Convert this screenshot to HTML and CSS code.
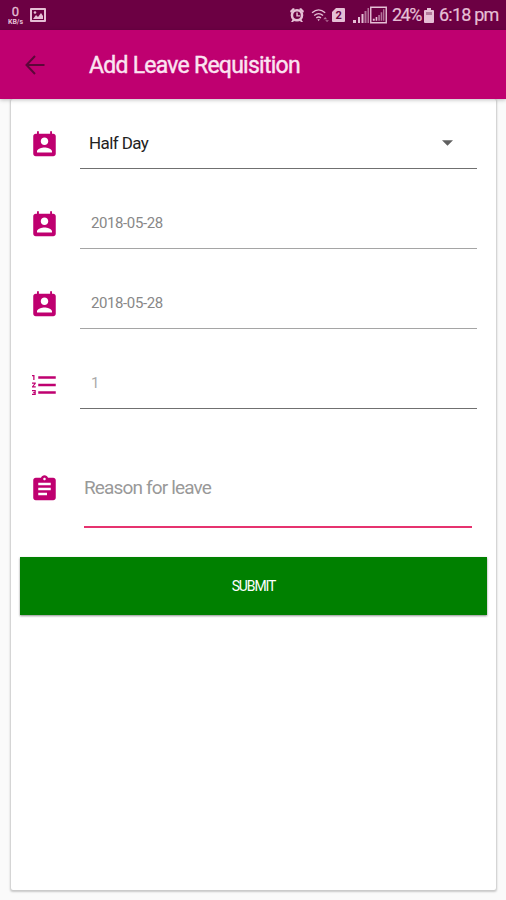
FILE: index.html
```html
<!DOCTYPE html>
<html lang="en">
<head>
<meta charset="utf-8">
<title>Add Leave Requisition</title>
<link rel="stylesheet" href="styles.css">
</head>
<body>
<svg class="defs" width="0" height="0">
  <symbol id="contact" viewBox="0 0 24 24"><path fill-rule="evenodd" d="M19 3h-1V1h-1.500v2H7.500V1H6v2H5c-1.100 0-2 .9-2 2v14c0 1.100.9 2 2 2h14c1.100 0 2-.9 2-2V5c0-1.100-.9-2-2-2zm-7 3c1.700 0 3 1.300 3 3s-1.300 3-3 3-3-1.300-3-3 1.300-3 3-3zm6 12H6v-1c0-2 4-3.100 6-3.100s6 1.100 6 3.100v1z"/></symbol>
</svg>
<div class="status">
  <div class="speed"><span class="speed-num">0</span><span class="speed-unit">KB/s</span></div>
  <svg class="photo" viewBox="0 0 16 14"><path fill-rule="evenodd" d="M1 0h14q1 0 1 1v12q0 1-1 1H1q-1 0-1-1V1q0-1 1-1zM2 2v10h12V2z"/><path d="M3 11l3-4 2 2 3-4 2 3v3z"/><circle cx="5" cy="4.500" r="1.300"/></svg>
  <div class="status-right">
    <svg class="alarm" viewBox="0 0 16 16"><path d="M1 4l3-3 2 1-4 4zM15 4l-3-3-2 1 4 4zM2 15l2-3 2 1-2 2zM14 15l-2-3-2 1 2 2z"/><path fill-rule="evenodd" d="M8 2a6.300 6.300 0 100 12.600A6.300 6.300 0 008 2zm0 2.500a3.800 3.800 0 110 7.600 3.800 3.800 0 010-7.600z"/><path d="M7.300 5.500h1.500v2.700h2.400v1.300H7.300z"/></svg>
    <svg class="wifi" viewBox="0 0 20 16"><path class="stroke" d="M1 5q7-6 14 0M3.300 8q4.700-4 9.400 0M5.500 10.700q2.500-2 5 0"/><path d="M6.700 12h2.600L8 14z"/><path class="dim" d="M13 12l2-2.500 2 2.500zM15 13h4l-2 2z"/></svg>
    <svg class="sim" viewBox="0 0 13 14"><path d="M4 0h8q1 0 1 1v12q0 1-1 1H1q-1 0-1-1V4z"/><text x="6.600" y="11">2</text></svg>
    <svg class="signal" viewBox="0 0 16 15"><path d="M0 12h3v3H0zM5 9h2v6H5zM8.500 6h2v9h-2z"/><path class="dim" d="M11.500 3h2v12h-2zM14.500 0H16v15h-1.500z"/></svg>
    <svg class="signal-box" viewBox="0 0 18 18"><path class="stroke" d="M.8.800h16.400v16.400H.8z"/><path d="M3 13h2v2H3zM6 11h1.700v4H6z"/><path class="dim" d="M8.700 9h1.800v6H8.700zM11.300 6H13v9h-1.700zM13.800 3h1.400v12h-1.400z"/></svg>
    <span class="battery-text">24%</span>
    <svg class="battery" viewBox="0 0 10 15"><path d="M3 0h4v2h2q1 0 1 1v11q0 1-1 1H1q-1 0-1-1V3q0-1 1-1h2z"/><path class="drained" d="M2 4h6v3H2z"/></svg>
    <span class="clock">6:18 pm</span>
  </div>
</div>
<header class="appbar">
  <svg class="back" viewBox="0 0 20 20"><path d="M19.500 10H1.500M10 1L1.500 10l8.500 9"/></svg>
  <h1 class="title">Add Leave Requisition</h1>
</header>
<main class="card">
  <div class="row"><svg class="icon"><use href="#contact"/></svg>
    <div class="field select"><span class="choice">Half Day</span><svg class="caret" viewBox="0 0 12 6"><path d="M0 0h12L6 6z"/></svg></div></div>
  <div class="row"><svg class="icon"><use href="#contact"/></svg>
    <div class="field light"><span class="date">2018-05-28</span></div></div>
  <div class="row"><svg class="icon"><use href="#contact"/></svg>
    <div class="field light"><span class="date">2018-05-28</span></div></div>
  <div class="row"><svg class="icon numbered" viewBox="0 0 24 24"><path d="M2 17h2v.5H3v1h1v.5H2v1h3v-4H2v1zm1-9h1V4H2v1h1v3zm-1 3h1.800L2 13.100v.9h3v-1H3.200L5 10.900V10H2v1zm5-6v2h14V5H7zm0 14h14v-2H7v2zm0-6h14v-2H7v2z"/></svg>
    <div class="field"><span class="date count">1</span></div></div>
  <div class="row reason"><svg class="icon" viewBox="0 0 24 24"><path d="M19 3h-4.180C14.400 1.840 13.300 1 12 1c-1.300 0-2.400.84-2.820 2H5c-1.100 0-2 .9-2 2v14c0 1.100.9 2 2 2h14c1.100 0 2-.9 2-2V5c0-1.100-.9-2-2-2zm-7 0c.55 0 1 .45 1 1s-.45 1-1 1-1-.45-1-1 .45-1 1-1zm2 14H7v-2h7v2zm3-4H7v-2h10v2zm0-4H7V7h10v2z"/></svg>
    <div class="field focused"><span class="hint">Reason for leave</span></div></div>
  <button class="submit">SUBMIT</button>
</main>
</body>
</html>
```
FILE: styles.css
```css
* { box-sizing: border-box; }
body {
  margin: 0;
  height: 900px;
  display: flex;
  flex-direction: column;
  overflow: hidden;
  background: #fafafa;
  font-family: Roboto, "Liberation Sans", sans-serif;
}
.defs { position: absolute; }
.status {
  flex: none;
  height: 30px;
  display: flex;
  align-items: center;
  padding: 0 7px 0 6px;
  background: #6c0043;
  color: #e5bfd5;
  fill: #e5bfd5;
}
.speed { display: flex; flex-direction: column; align-items: center; width: 19px; margin-right: 5px; }
.speed-num { font-size: 13px; line-height: 13px; -webkit-text-stroke: .3px; }
.speed-unit { font-size: 7px; line-height: 8px; font-weight: 700; }
.photo { width: 16px; height: 14px; }
.status-right { display: flex; align-items: center; margin-left: auto; }
.stroke { fill: none; stroke: #e5bfd5; stroke-width: 1.5; }
.dim { opacity: .6; }
.drained { fill: #b37a9c; }
.alarm { width: 16px; height: 16px; margin-right: 6px; }
.wifi { width: 19px; height: 15px; margin-right: 2px; }
.sim { width: 13px; height: 14px; margin-right: 8px; }
.sim text { font-size: 11px; font-weight: 700; fill: #6c0043; text-anchor: middle; }
.signal { width: 16px; height: 15px; margin-right: 1px; }
.signal-box { width: 17px; height: 18px; margin-right: 5px; }
.battery-text, .clock { font-size: 18px; line-height: 30px; white-space: nowrap; -webkit-text-stroke: .2px; }
.battery-text { width: 29px; letter-spacing: -1.5px; margin-right: 3px; }
.battery { width: 10px; height: 15px; margin-right: 5px; }
.clock { width: 60px; letter-spacing: -.8px; }
.appbar {
  flex: none;
  height: 69px;
  display: flex;
  align-items: center;
  padding-left: 25px;
  background: #bf0070;
  box-shadow: 0 1px 4px rgba(0, 0, 0, .25);
  z-index: 1;
}
.back { width: 20px; height: 20px; margin-right: 44px; fill: none; stroke: #5c0739; stroke-width: 2; }
.title { margin: 0; padding-top: 2px; color: #fbe4f1; font-size: 23px; line-height: 30px; font-weight: 400; letter-spacing: -.75px; white-space: nowrap; -webkit-text-stroke: .4px; }
.card {
  flex: none;
  height: 791px;
  margin: 0 10px 0 11px;
  padding: 18px 9px 0;
  background: #fff;
  border-radius: 2px;
  box-shadow: 0 1px 2px 1px rgba(0, 0, 0, .2);
}
.row { display: flex; align-items: center; margin: 0 10px 28px 9px; }
.icon { flex: none; width: 31px; height: 30px; margin: 3px 20px 0 0; fill: #bf0070; }
.field {
  flex: 1;
  height: 52px;
  display: flex;
  align-items: center;
  border-bottom: 1px solid #707070;
}
.light { border-color: #a5a5a5; }
.choice { margin-left: 9px; font-size: 17px; letter-spacing: -.6px; color: #222; }
.caret { width: 11px; height: 6px; margin: 0 24px 0 auto; fill: #606060; }
.date { margin-left: 11px; font-size: 15px; letter-spacing: -.4px; color: #888; }
.count { color: #aaa; }
.reason { margin: 39px 15px 29px 9px; }
.reason .icon { margin: 1px 24px 0 0; }
.reason .field { height: 80px; }
.focused { border-bottom: 2px solid #e6336f; }
.hint { font-size: 19px; letter-spacing: -.85px; color: #999; }
.submit {
  display: block;
  width: 467px;
  height: 58px;
  padding: 0;
  border: 0;
  background: #008000;
  color: #fff;
  font: 400 14px/58px Roboto, "Liberation Sans", sans-serif;
  letter-spacing: -1.1px;
  box-shadow: 0 1px 2px rgba(0, 0, 0, .45);
}
```
